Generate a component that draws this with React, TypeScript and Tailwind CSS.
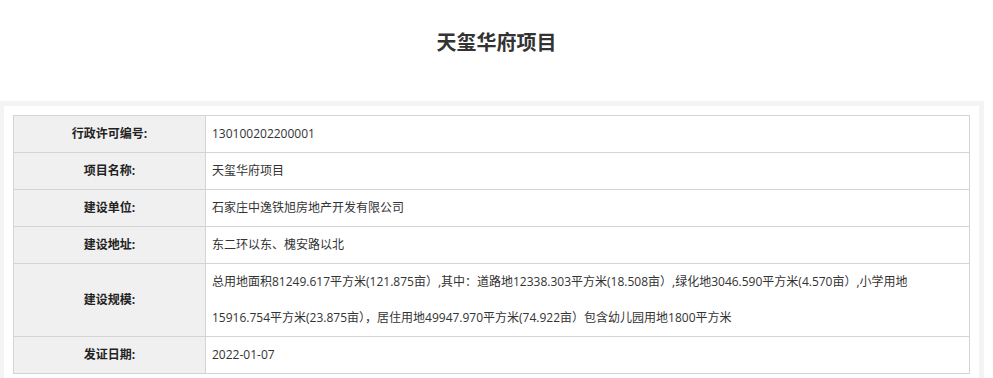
import React from "react";

const rows: { label: string; value: React.ReactNode; tall?: boolean }[] = [
  { label: "行政许可编号:", value: "130100202200001" },
  { label: "项目名称:", value: "天玺华府项目" },
  { label: "建设单位:", value: "石家庄中逸铁旭房地产开发有限公司" },
  { label: "建设地址:", value: "东二环以东、槐安路以北" },
  {
    label: "建设规模:",
    tall: true,
    value: (
      <>
        总用地面积81249.617平方米(121.875亩）,其中：道路地12338.303平方米(18.508亩）,绿化地3046.590平方米(4.570亩）,小学用地
        <br />
        15916.754平方米(23.875亩），居住用地49947.970平方米(74.922亩）包含幼儿园用地1800平方米
      </>
    ),
  },
  { label: "发证日期:", value: "2022-01-07" },
];

export default function App() {
  return (
    <div
      className="w-[993px] h-[378px] overflow-hidden bg-white text-[#333]"
      style={{ fontFamily: '"Open Sans", "Noto Sans CJK SC", sans-serif' }}
    >
      <div
        className="h-[101px] pt-[28px] text-center text-[20px] leading-[28px] font-bold text-[#333]"
        style={{ fontFamily: '"Noto Sans CJK SC", sans-serif' }}
      >
        天玺华府项目
      </div>
      <div className="w-[984px] border-l-4 border-r-[5px] border-t-[5px] border-[#f4f4f4] bg-white pl-[9px] pt-[9px] h-[300px]">
        <table className="w-[957px] border-collapse text-[12px] table-fixed">
          <colgroup>
            <col className="w-[192px]" />
            <col />
          </colgroup>
          <tbody>
            {rows.map((r) => (
              <tr key={r.label}>
                <td className="border border-[#d4d4d4] bg-[#f0f0f0] p-0 text-center font-bold leading-[36px] h-[36px] text-[#222]">
                  {r.label}
                </td>
                <td className="border border-[#d4d4d4] bg-white p-0 pl-[6px] leading-[36px] h-[36px] whitespace-nowrap">
                  {r.value}
                </td>
              </tr>
            ))}
          </tbody>
        </table>
      </div>
    </div>
  );
}
